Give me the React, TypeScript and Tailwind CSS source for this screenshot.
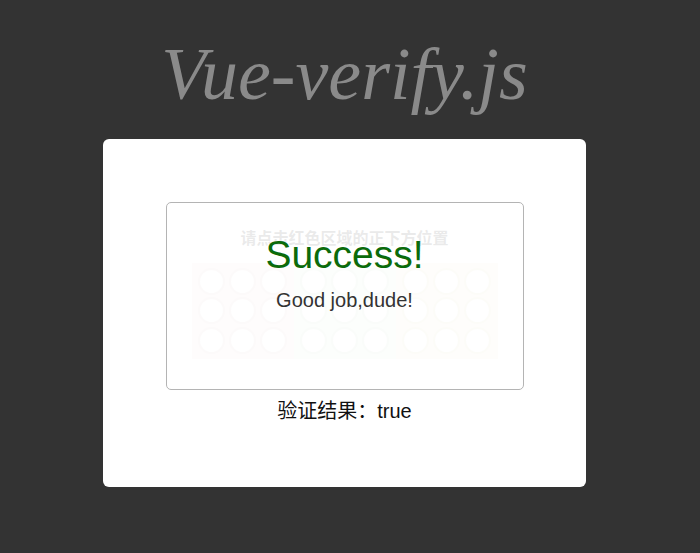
import React from "react";

const tiles = [
  { bg: "bg-[#f7e4e4]", ring: "border-[#ead0d0]" },
  { bg: "bg-[#e4f7e4]", ring: "border-[#d0ead0]" },
  { bg: "bg-[#f9f3dc]", ring: "border-[#ece4c4]" },
];

function Tile({ bg, ring }: { bg: string; ring: string }) {
  return (
    <div className={`grid h-[96px] w-[102px] grid-cols-3 place-items-center p-1 ${bg}`}>
      {Array.from({ length: 9 }).map((_, i) => (
        <div key={i} className={`h-[27px] w-[27px] rounded-full border-2 bg-white ${ring}`} />
      ))}
    </div>
  );
}

export default function App() {
  return (
    <div className="flex min-h-[553px] w-full flex-col items-center bg-[#333333] pr-[11px] font-['Liberation_Sans','Noto_Sans_CJK_SC',sans-serif]">
      <h1 className="mt-[31px] font-['Liberation_Serif',serif] text-[74px] italic leading-[86px] text-[#8a8a8a]">
        Vue-verify.js
      </h1>

      <div className="mt-[22px] flex h-[348px] w-[483px] flex-col items-center rounded-[6px] bg-white">
        {/* verify panel */}
        <div className="relative mt-[63px] h-[188px] w-[358px] overflow-hidden rounded-[5px] border border-[#b4b4b4] bg-white">
          <div className="flex flex-col items-center pt-[26px] opacity-[0.1]">
            <p className="text-[16px] font-bold leading-[20px] text-[#333]">请点击红色区域的正下方位置</p>
            <div className="mt-[14px] flex">
              {tiles.map((t, i) => (
                <Tile key={i} bg={t.bg} ring={t.ring} />
              ))}
            </div>
          </div>
          <div className="absolute inset-0 flex flex-col items-center pt-[30px]">
            <div className="text-[39px] leading-[44px] text-[#0b6b0b]">Success!</div>
            <div className="mt-[11px] text-[20px] leading-[24px] text-[#333]">Good job,dude!</div>
          </div>
        </div>

        <p className="mt-[8px] text-[20px] leading-[26px] text-[#111]">验证结果：true</p>
      </div>
    </div>
  );
}
